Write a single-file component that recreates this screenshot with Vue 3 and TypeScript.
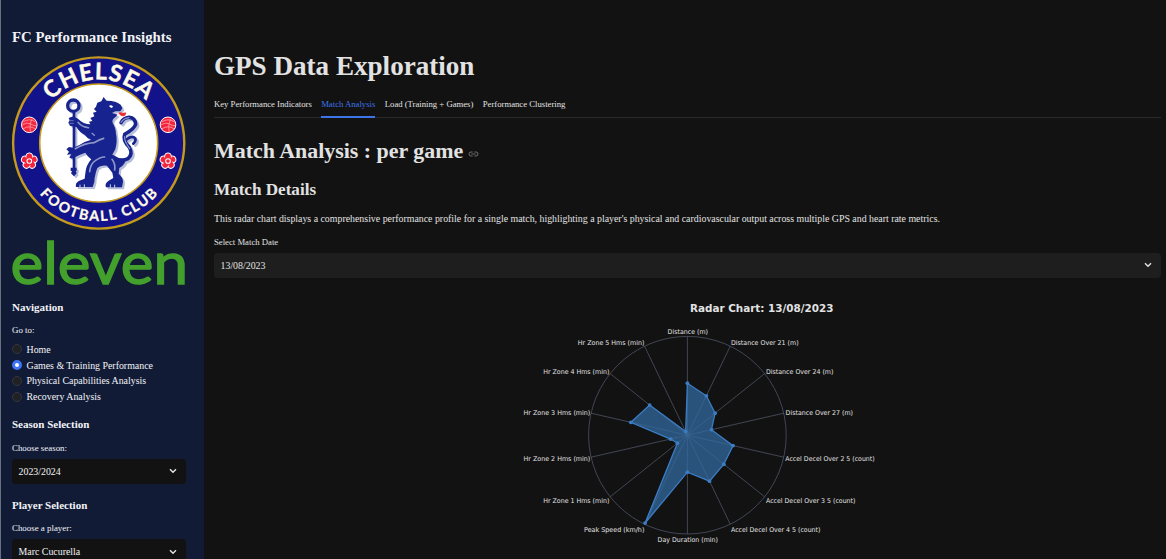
<script setup lang="ts">
interface Axis {
  label: string
  value: number
  x: number
  y: number
  width: number
}

const navItems: string[] = ['Home', 'Games & Training Performance', 'Physical Capabilities Analysis', 'Recovery Analysis']
const activeNav = 1
const tabs: string[] = ['Key Performance Indicators', 'Match Analysis', 'Load (Training + Games)', 'Performance Clustering']
const activeTab = 1

const cx = 187.4
const cy = 145.2
const radius = 98.8

const axes: Axis[] = [
  { label: 'Distance (m)', value: 52, x: 167.6, y: 44.3, width: 40.4 },
  { label: 'Distance Over 21 (m)', value: 43.7, x: 231, y: 54.8, width: 67.6 },
  { label: 'Distance Over 24 (m)', value: 35.4, x: 266, y: 83.8, width: 67.4 },
  { label: 'Distance Over 27 (m)', value: 24.7, x: 285.6, y: 125.2, width: 67.4 },
  { label: 'Accel Decel Over 2 5 (count)', value: 46.8, x: 285.3, y: 171.4, width: 89.4 },
  { label: 'Accel Decel Over 3 5 (count)', value: 46.6, x: 266, y: 213.4, width: 89.4 },
  { label: 'Accel Decel Over 4 5 (count)', value: 51, x: 231, y: 242.4, width: 89.4 },
  { label: 'Day Duration (min)', value: 37, x: 157.6, y: 252.4, width: 60.4 },
  { label: 'Peak Speed (km/h)', value: 97.5, x: 84, y: 242.4, width: 60.4 },
  { label: 'Hr Zone 1 Hms (min)', value: 12.8, x: 43.2, y: 213.4, width: 66.2 },
  { label: 'Hr Zone 2 Hms (min)', value: 17.2, x: 23.6, y: 171.4, width: 66.7 },
  { label: 'Hr Zone 3 Hms (min)', value: 58, x: 23.6, y: 125.2, width: 66.7 },
  { label: 'Hr Zone 4 Hms (min)', value: 48.3, x: 43.2, y: 83.8, width: 66.2 },
  { label: 'Hr Zone 5 Hms (min)', value: 4, x: 77.8, y: 54.8, width: 66.7 },
]

function polar(index: number, r: number): { x: number; y: number } {
  const angle = (index / axes.length) * Math.PI * 2
  return { x: cx + Math.sin(angle) * r, y: cy - Math.cos(angle) * r }
}

const spokes = axes.map((_, i) => polar(i, radius))
const points = axes.map((axis, i) => polar(i, axis.value))
const outline = points.map((p) => `${p.x.toFixed(2)},${p.y.toFixed(2)}`).join(' ')
</script>

<template>
  <div class="app">
    <aside class="sidebar">
      <h2 class="brand">FC Performance Insights</h2>

      <svg class="crest" viewBox="12 56 174 174" aria-label="Chelsea Football Club">
        <defs>
          <path id="arcTop" d="M35.2 143a63.5 63.5 0 0 1 127 0" />
          <path id="arcBottom" d="M20.7 143a78 78 0 0 0 156 0" />
        </defs>
        <circle cx="98.7" cy="143" r="85.6" fill="#12128a" stroke="#c49a1c" stroke-width="2.4" />
        <circle cx="98.7" cy="143" r="59" fill="#fff" stroke="#c49a1c" stroke-width="1.6" />
        <text class="crest-top" text-anchor="middle" textLength="106">
          <textPath href="#arcTop" startOffset="50%" textLength="106">CHELSEA</textPath>
        </text>
        <text class="crest-bottom" text-anchor="middle" textLength="134">
          <textPath href="#arcBottom" startOffset="50%" textLength="134">FOOTBALL CLUB</textPath>
        </text>

        <g v-for="x in [29.3, 168]" :key="x" :transform="`translate(${x} 124.8)`">
          <circle r="7.8" fill="#f3243b" stroke="#fff" stroke-width="1" />
          <path d="M-6-3Q0-7 6-3M-7 0Q-2-3 1-1T7 1M-6 4Q0 0 6 4M3-6Q0-2 1 7" fill="none" stroke="#ffa3ad" stroke-width=".8" />
        </g>
        <g v-for="x in [29.3, 168]" :key="`r${x}`" :transform="`translate(${x} 161)`">
          <g fill="#f3243b" stroke="#fff" stroke-width="1">
            <circle v-for="a in 5" :key="a" cy="-4.7" r="3.4" :transform="`rotate(${a * 72})`" />
          </g>
          <circle r="4.6" fill="#f3243b" />
          <circle r="2.3" fill="#f3243b" stroke="#fff" stroke-width="1.1" />
        </g>

        <g transform="translate(50 90) scale(.33333)">
          <g v-for="layer in 2" :key="layer" :class="layer === 1 ? 'lion-shadow' : 'lion'" :transform="layer === 1 ? 'translate(6 6)' : ''">
            <circle class="line" cx="70" cy="47" r="17" stroke-width="10" />
            <path class="line" d="M72 64V245" stroke-width="8" />
            <path d="M62 233h18v9l-3 2 3 6-8 9-9-9 3-6-4-2z" />
            <path d="M138 50L142 38 154 34 161 21 169 32Q196 31 212 44L217 55 211 64 196 64 186 69 203 74 194 83Q185 88 188 99 197 112 198 132 203 152 196 178L186 196Q205 212 227 211 223 226 208 234L206 251Q219 262 219 276L216 292H168Q163 280 176 272L190 264 187 248 171 227Q151 224 142 234 137 246 134 263 135 276 128 291H78Q75 278 88 272L104 266 106 250Q108 225 124 208 112 200 106 188 84 195 66 206L58 203 64 193 51 194 57 185 49 178 57 171 70 173Q92 164 104 156L124 149Q110 144 104 134 90 129 80 112L60 107 55 98 59 91 56 84 70 79 84 86Q100 103 121 103L117 95 127 93 121 84 133 79 129 68 140 65 132 57Z" />
            <path class="line" d="M188 200Q212 217 234 206 250 192 238 172 217 150 224 133 253 117 257 103 256 84 237 82 220 84 213 98" stroke-width="10.5" />
            <path class="line" d="M229 149Q246 134 256 145 258 155 250 161" stroke-width="8" />
          </g>
          <g fill="none" stroke="#8e98c8" stroke-linecap="round">
            <path d="M84 97Q96 112 116 113" stroke-width="4.5" />
            <path d="M76 176Q104 160 132 158 150 148 161 145" stroke-width="5" />
            <path d="M119 245Q121 222 136 212 152 200 164 201M186 208Q197 222 194 240" stroke-width="5" />
            <path d="M213 97Q222 84 237 83" stroke-width="3.5" />
            <path d="M224 140Q222 152 239 176" stroke-width="3.5" />
            <path d="M126 130l7 6" stroke-width="4" />
            <path d="M60 92h10M60 100h10" stroke-width="2" />
          </g>
          <path d="M177 47q7-4 12 2l-3 5q-7-1-9-7z" fill="#fff" />
          <path d="M205 69q7-4 12 0 7-2 12-1-3 13-14 10-6-3-10-9z" fill="#ea2f35" />
          <path d="M90 284v9m13-10v10m78-10v10m13-9v9" stroke="#fff" stroke-width="2.4" />
        </g>
      </svg>

      <svg class="eleven" viewBox="0 0 176 50" aria-label="eleven">
        <text x="-1.5" y="45.6" textLength="177.5" lengthAdjust="spacingAndGlyphs">eleven</text>
      </svg>

      <h3 class="section">Navigation</h3>
      <p class="caption goto">Go to:</p>
      <ul class="nav">
        <li v-for="(item, i) in navItems" :key="item">
          <span class="radio" :class="{ on: i === activeNav }"></span>
          <span class="nav-text">{{ item }}</span>
        </li>
      </ul>

      <h3 class="section season">Season Selection</h3>
      <p class="caption">Choose season:</p>
      <div class="select">
        <span>2023/2024</span>
        <svg class="chev" viewBox="0 0 8 6"><path d="M1 1.2l3 3 3-3" /></svg>
      </div>

      <h3 class="section player">Player Selection</h3>
      <p class="caption">Choose a player:</p>
      <div class="select">
        <span>Marc Cucurella</span>
        <svg class="chev" viewBox="0 0 8 6"><path d="M1 1.2l3 3 3-3" /></svg>
      </div>
    </aside>

    <main class="main">
      <h1>GPS Data Exploration</h1>
      <nav class="tabs">
        <span v-for="(tab, i) in tabs" :key="tab" class="tab" :class="{ active: i === activeTab }">{{ tab }}</span>
      </nav>
      <h2 class="heading">
        <span>Match Analysis : per game</span>
        <svg class="link" viewBox="0 0 11 6"><path d="M4.6 1H3a2 2 0 0 0 0 4h1.6M6.4 1H8a2 2 0 0 1 0 4H6.4M3.4 3h4.2" /></svg>
      </h2>
      <h3 class="details">Match Details</h3>
      <p class="desc">This radar chart displays a comprehensive performance profile for a single match, highlighting a player's physical and cardiovascular output across multiple GPS and heart rate metrics.</p>
      <p class="date-label">Select Match Date</p>
      <div class="select wide">
        <span>13/08/2023</span>
        <svg class="chev" viewBox="0 0 8 6"><path d="M1 1.2l3 3 3-3" /></svg>
      </div>

      <svg class="radar" viewBox="0 0 400 269" width="400" height="269">
        <text class="radar-title" x="190" y="22" textLength="143.5" lengthAdjust="spacingAndGlyphs">Radar Chart: 13/08/2023</text>
        <circle :cx="cx" :cy="cy" :r="radius" class="grid" />
        <line v-for="(s, i) in spokes" :key="i" :x1="cx" :y1="cy" :x2="s.x" :y2="s.y" class="grid" />
        <polygon :points="outline" class="area" />
        <circle v-for="(p, i) in points" :key="`p${i}`" :cx="p.x" :cy="p.y" r="1.9" class="dot" />
        <text v-for="a in axes" :key="a.label" class="axis" :x="a.x" :y="a.y" :textLength="a.width" lengthAdjust="spacingAndGlyphs">{{ a.label }}</text>
      </svg>
    </main>
  </div>
</template>

<style>
body {
  background: #121212;
  overflow: hidden;
}
</style>

<style scoped>
.app {
  display: flex;
  width: 1166px;
  height: 559px;
  overflow: hidden;
  background: #121212;
  color: #e2e2e2;
  font-family: "Liberation Serif", "Times New Roman", serif;
}
h1, h2, h3, p, ul {
  margin: 0;
  padding: 0;
  white-space: nowrap;
}
.sidebar {
  box-sizing: border-box;
  flex: none;
  width: 204px;
  height: 559px;
  padding: 28px 18px 0 11px;
  border-left: 1px solid #667080;
  background: #111b36;
  color: #f2f3f6;
  overflow: hidden;
}
.brand {
  height: 28px;
  font-size: 14.8px;
  line-height: 19px;
}
.crest {
  display: block;
  width: 174px;
  height: 174px;
  overflow: visible;
}
.crest-top {
  font: 700 23px Lato, sans-serif;
  fill: #fffbe6;
  stroke: #fffbe6;
  stroke-width: .5;
}
.crest-bottom {
  font: 700 14.2px Lato, sans-serif;
  fill: #fffbe6;
  stroke: #fffbe6;
  stroke-width: .3;
}
.lion { fill: #17238e; stroke: #17238e; }
.lion-shadow { fill: #b6bdd9; stroke: #b6bdd9; }
.lion path:not(.line), .lion-shadow path:not(.line) { stroke: none; }
.line { fill: none; stroke-linecap: round; }
.eleven {
  display: block;
  width: 176px;
  height: 50px;
  margin-top: 8px;
  overflow: visible;
}
.eleven text {
  font: 400 59px Lato, sans-serif;
  fill: #43a02c;
  stroke: #43a02c;
  stroke-width: 1.4;
}
.section {
  height: 14px;
  margin-top: 11.5px;
  font-size: 11px;
  line-height: 14px;
}
.section.season { margin-top: 12.5px; }
.section.player { margin-top: 14px; }
.caption {
  height: 12px;
  margin-top: 10.5px;
  font-size: 8.9px;
  line-height: 12px;
}
.caption.goto { margin-top: 10px; }
.nav {
  margin-top: 6px;
  list-style: none;
}
.nav li {
  display: flex;
  align-items: center;
  height: 15.8px;
  gap: 4.5px;
  font-size: 9.9px;
}
.radio {
  box-sizing: border-box;
  width: 10px;
  height: 10px;
  border: 1px solid #34373c;
  border-radius: 50%;
  background: #202124;
}
.radio.on {
  border: 3px solid #3d74f5;
  background: #fff;
}
.select {
  display: flex;
  align-items: center;
  justify-content: space-between;
  box-sizing: border-box;
  width: 174px;
  height: 25px;
  margin-top: 5px;
  padding: 0 9px 0 6.5px;
  border-radius: 4px;
  background: #121212;
  font-size: 9.9px;
}
.chev {
  width: 8px;
  height: 6px;
}
.chev path {
  fill: none;
  stroke: #e6e6e6;
  stroke-width: 1.4;
}
.main {
  flex: 1;
  min-width: 0;
  padding: 48px 5px 0 10px;
}
h1 {
  height: 36px;
  font-size: 27.1px;
  line-height: 36px;
}
.tabs {
  display: flex;
  gap: 9.4px;
  height: 21px;
  margin-top: 12px;
  border-bottom: 1px solid #29292b;
  font-size: 8.68px;
  line-height: 16px;
  white-space: nowrap;
}
.tab {
  height: 20px;
  border-bottom: 2px solid transparent;
}
.tab.active {
  border-color: #3d74e8;
  color: #3d74e8;
}
.heading {
  display: flex;
  align-items: center;
  gap: 5px;
  height: 28px;
  margin-top: 19px;
  font-size: 21.93px;
  line-height: 28px;
}
.link {
  width: 11px;
  height: 6px;
  margin-top: 5px;
}
.link path {
  fill: none;
  stroke: #777;
  stroke-width: .9;
}
.details {
  height: 22px;
  margin-top: 14px;
  font-size: 17.1px;
  line-height: 22px;
}
.desc {
  height: 14px;
  margin-top: 11px;
  font-size: 9.87px;
  line-height: 14px;
}
.date-label {
  height: 12px;
  margin-top: 10px;
  font-size: 8.7px;
  line-height: 12px;
}
.select.wide {
  width: 947px;
  margin-top: 4.5px;
  background: #1e1e1e;
}
.radar {
  display: block;
  margin: 12px 0 0 286px;
}
.radar-title {
  font: 700 10.5px "DejaVu Sans", sans-serif;
  fill: #e2e2e2;
}
.axis {
  font: 6.7px "DejaVu Sans", sans-serif;
  fill: #e2e2e2;
}
.grid {
  fill: none;
  stroke: #5a6276;
  stroke-opacity: .65;
  stroke-width: 1;
}
.area {
  fill: #32699f;
  fill-opacity: .75;
  stroke: #3b7dc4;
  stroke-width: 1.3;
}
.dot { fill: #3b7dc4; }
</style>
